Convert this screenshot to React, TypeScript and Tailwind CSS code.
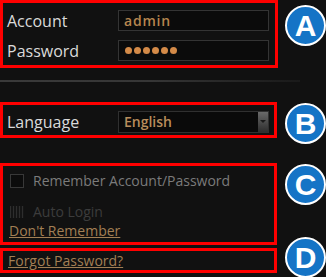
import React from "react";

const Badge = ({ letter, cls }: { letter: string; cls: string }) => (
  <div
    className={`absolute left-[285px] w-[41px] h-[41px] rounded-full bg-[#1574c6] border-[2px] border-white flex items-center justify-center text-white text-[30px] font-bold leading-none ${cls}`}
    style={{ fontFamily: '"Liberation Sans", Arial, sans-serif' }}
  >
    {letter}
  </div>
);

export default function App() {
  return (
    <div
      className="relative w-[326px] h-[277px] bg-[#111111] overflow-hidden"
      style={{ fontFamily: '"Open Sans", "Noto Sans", sans-serif' }}
    >
      {/* A */}
      <div className="w-[278px] h-[68px] border-[3px] border-[#ff0000] flex flex-col pt-[7px] gap-[9px] pl-[4px]">
        <div className="flex items-center h-[21px]">
          <span className="w-[111px] text-[16px] font-medium text-[#dadada] leading-none">Account</span>
          <div className="w-[151px] h-[21px] border border-[#343434] bg-[#0b0b0b] flex items-center px-[5px] text-[14px] font-semibold text-[#b5854f] tracking-[0.8px]">
            admin
          </div>
        </div>
        <div className="flex items-center h-[21px]">
          <span className="w-[111px] text-[16px] font-medium text-[#dadada] leading-none">Password</span>
          <div className="w-[151px] h-[21px] border border-[#343434] bg-[#0b0b0b] flex items-center gap-[2px] px-[6px]">
            {[0, 1, 2, 3, 4, 5].map((i) => (
              <span key={i} className="w-[7px] h-[7px] rounded-full bg-[#d38a48]" />
            ))}
          </div>
        </div>
      </div>

      {/* separator */}
      <div className="mt-[12px] w-[300px] h-[2px] bg-gradient-to-r from-[#3a3a3a] via-[#363636] to-[#1a1a1a]" />

      {/* B */}
      <div className="mt-[20px] w-[277px] h-[36px] border-[3px] border-[#ff0000] flex items-center pl-[4px] pt-[3px]">
        <span className="w-[111px] text-[16px] font-medium text-[#dadada] leading-none">Language</span>
        <div className="w-[151px] h-[22px] border border-[#303030] bg-[#0a0a0a] flex items-center">
          <span className="flex-1 pl-[5px] text-[14px] font-semibold text-[#b88d5c]">English</span>
          <div className="w-[10px] h-full bg-gradient-to-b from-[#6a6a6a] to-[#2e2e2e] flex items-center justify-center">
            <div className="w-0 h-0 border-l-[3px] border-r-[3px] border-t-[3px] border-l-transparent border-r-transparent border-t-[#1a1a1a]" />
          </div>
        </div>
      </div>

      {/* C */}
      <div className="mt-[25px] w-[277px] h-[82px] border-[3px] border-[#ff0000] flex flex-col pl-[6px] pt-[5px]">
        <div className="flex items-center h-[20px]">
          <div className="w-[14px] h-[14px] border border-[#383838] bg-[#0c0c0c] ml-[1px]" />
          <span className="ml-[9px] text-[14px] text-[#7b7b7b] leading-none">Remember Account/Password</span>
        </div>
        <div className="flex items-center h-[20px] mt-[11px]">
          <div
            className="w-[14px] h-[12px] ml-[1px]"
            style={{
              backgroundImage:
                "repeating-linear-gradient(90deg, #2e2e2e 0px, #2e2e2e 1px, #151515 1px, #151515 3px)",
            }}
          />
          <span className="ml-[9px] text-[14px] text-[#3c3c3c] leading-none">Auto Login</span>
        </div>
        <span className="mt-[2px] text-[14px] text-[#a27f54] underline leading-none">Don't Remember</span>
      </div>

      {/* D */}
      <div className="mt-[3px] w-[277px] h-[25px] border-[3px] border-[#ff0000] flex items-center pl-[5px]">
        <span className="text-[14px] text-[#a27f54] underline leading-none">Forgot Password?</span>
      </div>

      <Badge letter="A" cls="top-[5px]" />
      <Badge letter="B" cls="top-[103px]" />
      <Badge letter="C" cls="top-[164px]" />
      <Badge letter="D" cls="top-[237px]" />
    </div>
  );
}
